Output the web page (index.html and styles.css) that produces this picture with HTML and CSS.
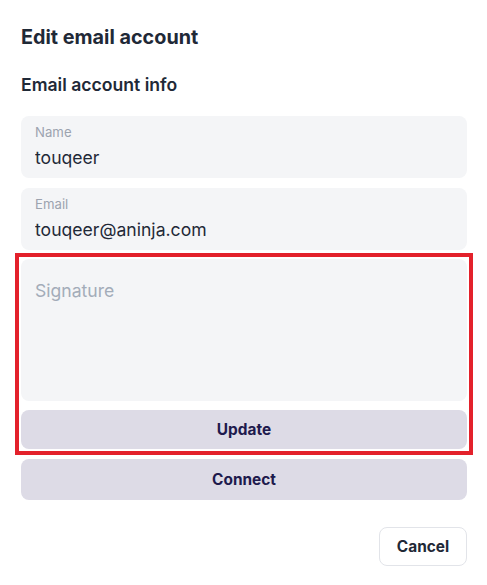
FILE: index.html
```html
<!DOCTYPE html>
<html lang="en">

<head>
  <meta charset="UTF-8" />
  <meta name="viewport" content="width=device-width, initial-scale=1.0" />
  <title>Edit email account</title>
  <link rel="stylesheet" href="styles.css">
</head>

<body>
  <div class="modal">
    <h1 class="title">Edit email account</h1>
    <h2 class="section-title">Email account info</h2>

    <div class="field">
      <label class="field-label" for="name">Name</label>
      <input class="field-input" id="name" type="text" value="touqeer" />
    </div>

    <div class="field">
      <label class="field-label" for="email">Email</label>
      <input class="field-input" id="email" type="text" value="touqeer@aninja.com" />
    </div>

    <div class="highlight">
      <textarea class="signature" placeholder="Signature"></textarea>
      <button class="btn-soft" type="button">Update</button>
    </div>

    <button class="btn-soft connect" type="button">Connect</button>

    <div class="footer">
      <button class="btn-outline" type="button">Cancel</button>
    </div>
  </div>
</body>

</html>
```

FILE: styles.css
```css
body {
  margin: 0;
  padding: 0;
  background: #fff;
  font-family: Inter, "Noto Sans", Arial, sans-serif;
  color: #1f2937;
}

.modal {
  padding: 23px 20px 0 21px;
  display: flex;
  flex-direction: column;
}

.title {
  margin: 0;
  font-size: 19.8px;
  line-height: 28px;
  font-weight: 700;
  color: #1f2937;
}

.section-title {
  margin: 21px 0 18px;
  font-size: 17.6px;
  line-height: 26px;
  font-weight: 600;
  color: #1f2937;
}

.field {
  background: #f4f5f7;
  border-radius: 8px;
  padding: 8px 14px;
  display: flex;
  flex-direction: column;
  gap: 5px;
  margin-bottom: 10px;
}

.field + .field {
  margin-bottom: 9px;
}

.field-label {
  font-size: 13.2px;
  line-height: 17px;
  color: #9ca3af;
}

.field-input {
  border: none;
  background: transparent;
  padding: 0;
  font-family: inherit;
  font-size: 17.6px;
  line-height: 24px;
  height: 24px;
  color: #1f2937;
  outline: none;
}

.highlight {
  display: flex;
  flex-direction: column;
  gap: 9px;
  outline: 4px solid #e3212b;
  outline-offset: 2px;
}

.signature {
  box-sizing: border-box;
  height: 142px;
  border: none;
  border-radius: 8px;
  background: #f4f5f7;
  padding: 20px 14px;
  font-family: inherit;
  font-size: 17.6px;
  line-height: 24px;
  color: #1f2937;
  resize: none;
  outline: none;
}

.signature::placeholder {
  color: #a3acb9;
}

.btn-soft {
  height: 39px;
  border: none;
  border-radius: 8px;
  background: #dddbe6;
  color: #1e1a4d;
  font-family: inherit;
  font-size: 15.4px;
  font-weight: 700;
  cursor: pointer;
}

.connect {
  margin-top: 10px;
  height: 41px;
}

.footer {
  display: flex;
  justify-content: flex-end;
  margin-top: 27px;
}

.btn-outline {
  width: 88px;
  height: 39px;
  border: 1px solid #e2e4e9;
  border-radius: 8px;
  background: #fff;
  color: #1f2937;
  font-family: inherit;
  font-size: 15.4px;
  font-weight: 700;
}
```
